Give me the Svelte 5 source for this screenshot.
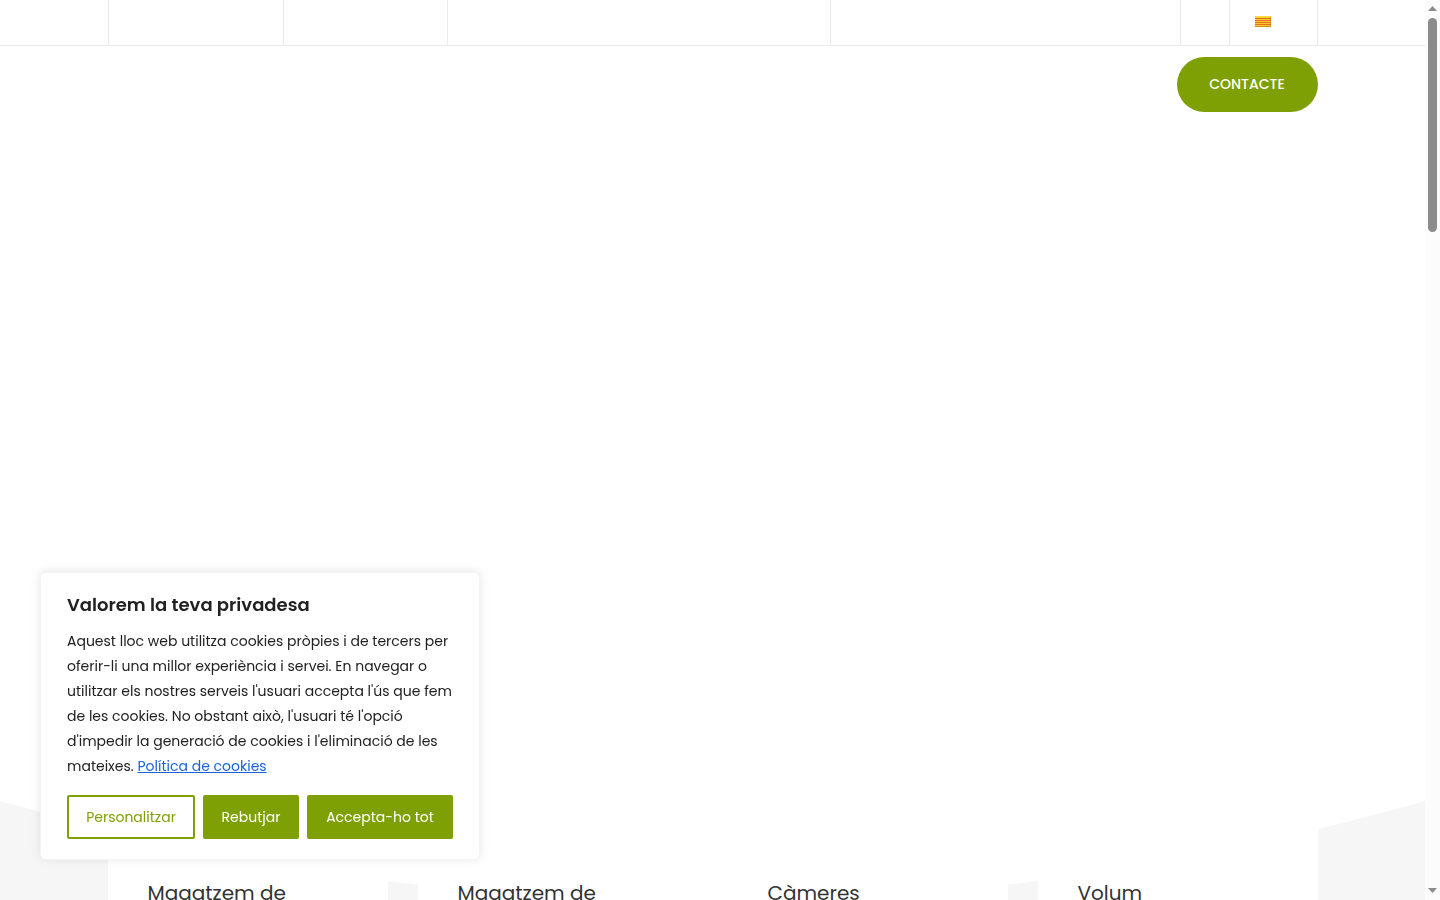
<script lang="ts">
  const services = ['Magatzem de', 'Magatzem de', 'Càmeres', 'Volum'];

  let consentOpen = $state(true);

  function closeConsent() {
    consentOpen = false;
  }
</script>

<div class="window">
  <div class="page">
    <div class="topbar">
      <div class="container topbar-cells">
        <span class="cell"></span>
        <span class="cell"></span>
        <span class="cell"></span>
        <span class="cell"></span>
        <span class="cell"></span>
        <div class="cell language">
          <a href="#ca" aria-label="Català">
            <svg width="16" height="11" viewBox="0 0 16 11" shape-rendering="crispEdges">
              <rect width="16" height="11" fill="#fcc832" />
              <rect width="16" height="1" fill="#fde23a" />
              <path d="M0 2h16v1H0zM0 4h16v1H0zM0 6h16v1H0zM0 8h16v1H0z" fill="#e8701c" />
              <path d="M0 10h16v1H0z" fill="#e28a10" />
              <path d="M15 1h1v10h-1z" fill="#c96a0c" opacity="0.5" />
            </svg>
          </a>
        </div>
      </div>
    </div>

    <header class="container header">
      <a class="contact" href="#contacte">CONTACTE</a>
    </header>

    <main class="hero"></main>

    <section class="services">
      <svg class="curve" viewBox="0 0 1425 101" preserveAspectRatio="none" aria-hidden="true">
        <path d="M0 0Q712 202 1425 0Z" fill="#fff" />
      </svg>
      <div class="container cards">
        {#each services as title}
          <article class="card">
            <h2>{title}</h2>
          </article>
        {/each}
      </div>
    </section>
  </div>

  <div class="scrollbar" aria-hidden="true">
    <svg width="9" height="5" viewBox="0 0 9 5"><path d="M0 5L4.5 0L9 5Z" fill="#8b8b8b" /></svg>
    <div class="track"><div class="thumb"></div></div>
    <svg width="9" height="5" viewBox="0 0 9 5"><path d="M0 0L4.5 5L9 0Z" fill="#8b8b8b" /></svg>
  </div>

  {#if consentOpen}
    <div class="consent" role="dialog" aria-labelledby="consent-title">
      <p class="consent-title" id="consent-title">Valorem la teva privadesa</p>
      <p class="consent-text">
        Aquest lloc web utilitza cookies pròpies i de tercers per oferir-li una millor experiència i
        servei. En navegar o utilitzar els nostres serveis l'usuari accepta l'ús que fem de les
        cookies. No obstant això, l'usuari té l'opció d'impedir la generació de cookies i
        l'eliminació de les mateixes. <a href="#cookies">Política de cookies</a>
      </p>
      <div class="consent-actions">
        <button class="btn outline">Personalitzar</button>
        <button class="btn" onclick={closeConsent}>Rebutjar</button>
        <button class="btn" onclick={closeConsent}>Accepta-ho tot</button>
      </div>
    </div>
  {/if}
</div>

<style>
  :global(body) {
    margin: 0;
    background: #fff;
    font-family: Poppins, Inter, sans-serif;
  }

  .window {
    display: grid;
    grid-template-columns: 1fr 15px;
    height: 100vh;
    overflow: hidden;
  }

  .page {
    display: flex;
    flex-direction: column;
    min-width: 0;
    overflow: hidden;
  }

  .container {
    box-sizing: border-box;
    width: 100%;
    max-width: 1210px;
    margin: 0 auto;
  }

  .topbar {
    border-bottom: 1px solid #ebebeb;
  }

  .topbar-cells {
    display: grid;
    grid-template-columns: 175px 164px 383px 1fr 49px 88px;
    height: 45px;
    border-right: 1px solid #ebebeb;
  }

  .cell {
    border-left: 1px solid #ebebeb;
  }

  .language {
    display: flex;
    align-items: center;
    padding: 0 25px 2px;
  }

  .language a,
  .language svg {
    display: block;
  }

  .header {
    display: flex;
    justify-content: flex-end;
    padding-top: 11px;
  }

  .contact {
    display: flex;
    align-items: center;
    justify-content: center;
    width: 141px;
    height: 55px;
    border-radius: 28px;
    background: #7ea004;
    color: #fff;
    font-size: 14px;
    font-weight: 500;
    text-decoration: none;
  }

  .hero {
    flex: 1;
  }

  .services {
    display: grid;
    height: 99px;
    background: #f6f6f6;
    overflow: hidden;
  }

  .curve,
  .cards {
    grid-area: 1 / 1;
  }

  .curve {
    width: 100%;
    height: 101px;
  }

  .cards {
    display: grid;
    grid-template-columns: repeat(4, 1fr);
    gap: 30px;
    z-index: 1;
  }

  .card {
    padding: 76px 40px 0;
    background: #fff;
  }

  .card h2 {
    margin: 0;
    color: #333;
    font-size: 20px;
    font-weight: 400;
    line-height: 32px;
    white-space: nowrap;
  }

  .scrollbar {
    display: flex;
    flex-direction: column;
    align-items: center;
    justify-content: space-between;
    box-sizing: border-box;
    padding: 6px 0 7px;
    background: #fcfcfc;
  }

  .track {
    flex: 1;
    padding: 7px 0;
  }

  .thumb {
    width: 9px;
    height: 214px;
    border-radius: 5px;
    background: #8b8b8b;
  }

  .consent {
    position: fixed;
    bottom: 40px;
    left: 40px;
    z-index: 10;
    box-sizing: border-box;
    width: 440px;
    padding: 20px 26px;
    border: 1px solid #f4f4f4;
    border-radius: 6px;
    background: #fff;
    box-shadow: 0 -1px 10px rgba(172, 171, 171, 0.3);
    color: #212121;
  }

  .consent-title {
    margin: 0 0 12px;
    font-size: 18px;
    font-weight: 600;
    line-height: 24px;
  }

  .consent-text {
    margin: 0 0 16px;
    font-size: 14px;
    line-height: 25px;
  }

  .consent-text a {
    color: #1863dc;
  }

  .consent-actions {
    display: grid;
    grid-template-columns: 128px 96px 1fr;
    gap: 8px;
  }

  .btn {
    height: 44px;
    padding: 0;
    border: 2px solid #7ea004;
    border-radius: 2px;
    background: #7ea004;
    color: #fff;
    font-family: inherit;
    font-size: 14px;
    cursor: pointer;
  }

  .btn.outline {
    background: transparent;
    color: #7ea004;
  }
</style>
